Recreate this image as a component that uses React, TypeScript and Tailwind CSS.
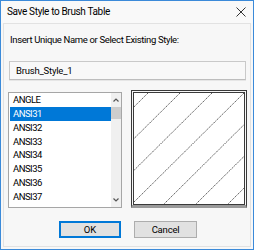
const items = ["ANGLE", "ANSI31", "ANSI32", "ANSI33", "ANSI34", "ANSI35", "ANSI36", "ANSI37", "ANSI38"];

function Hatch() {
  const lines = [];
  for (let k = 0; k < 8; k++) {
    const x = 14 + 32 * k;
    lines.push(<line key={k} x1={x} y1={0} x2={x - 112} y2={112} stroke="#333" strokeWidth="0.8" strokeDasharray="1.5 0.8" />);
  }
  return (
    <svg width="100%" height="100%" viewBox="0 0 110 112" preserveAspectRatio="none">
      {lines}
    </svg>
  );
}

export default function App() {
  return (
    <div className="w-[254px] h-[250px] border border-[#3b8ad9] bg-[#f7f7f7] flex flex-col font-['Roboto',sans-serif] text-[9.5px] text-black leading-none overflow-hidden">
      {/* Title bar */}
      <div className="h-[22px] flex items-center justify-between pl-[6px] pr-[6px] bg-[#f9f9f9]">
        <span className="text-[10px] tracking-[-0.35px]">Save Style to Brush Table</span>
        <svg width="10" height="10" viewBox="0 0 10 10" className="mr-[1px]">
          <path d="M0.5 0.5 L9.5 9.5 M9.5 0.5 L0.5 9.5" stroke="#333" strokeWidth="1" />
        </svg>
      </div>

      {/* Client */}
      <div className="flex-1 mx-[2px] mb-[2px] border border-[#e2e2e2] flex flex-col">
        <div className="pl-[6px] pt-[11px] h-[25px] tracking-[-0.35px]">Insert Unique Name or Select Existing Style:</div>

        <div className="ml-[5px] mt-[12px] w-[237px] h-[19px] border border-[#c9c9c9] border-b-[#bdbdbd] bg-[#f8f8f8] flex items-center pl-[6px] tracking-[-0.2px] shadow-[0_1px_0_#e6e6e6]">
          Brush_Style_1
        </div>

        <div className="flex mt-[10px] items-start">
          {/* List box */}
          <div className="ml-[4px] mt-[2px] w-[114px] h-[116px] border border-[#a6a6a6] bg-white flex overflow-hidden">
            <div className="flex-1 pl-[1px] overflow-hidden tracking-[-0.5px]">
              {items.map((it, i) => (
                <div
                  key={it}
                  className={
                    i === 1
                      ? "h-[13.8px] flex items-center pl-[3px] bg-[#0078d7] text-white"
                      : "h-[13.8px] flex items-center pl-[3px]"
                  }
                >
                  {it}
                </div>
              ))}
            </div>
            <div className="w-[10px] bg-[#f0f0f0] flex flex-col items-center">
              <svg width="8" height="14" viewBox="0 0 8 14">
                <path d="M1.5 8.5 L4 6 L6.5 8.5" stroke="#555" strokeWidth="1.2" fill="none" />
              </svg>
              <div className="w-[10px] h-[12px] bg-[#cdcdcd]" />
              <div className="flex-1" />
              <svg width="8" height="14" viewBox="0 0 8 14">
                <path d="M1.5 5.5 L4 8 L6.5 5.5" stroke="#555" strokeWidth="1.2" fill="none" />
              </svg>
            </div>
          </div>

          {/* Preview */}
          <div className="ml-[9px] w-[116px] h-[118px] border border-[#3a3a3a] border-b-[3px] border-b-[#9a9a9a] p-[1px] pb-0 flex bg-[#f7f7f7]">
            <div className="flex-1 border border-[#3a3a3a] bg-white">
              <Hatch />
            </div>
          </div>
        </div>

        <div className="flex mt-[13px]">
          <button className="ml-[55px] w-[62px] h-[17px] border-2 border-[#0078d7] bg-[#e1e1e1] flex items-center justify-center text-[9.5px] leading-none">
            OK
          </button>
          <button className="ml-[13px] w-[63px] h-[17px] border border-[#adadad] bg-[#e1e1e1] flex items-center justify-center text-[9.5px] tracking-[-0.2px] leading-none">
            Cancel
          </button>
        </div>
      </div>
    </div>
  );
}
